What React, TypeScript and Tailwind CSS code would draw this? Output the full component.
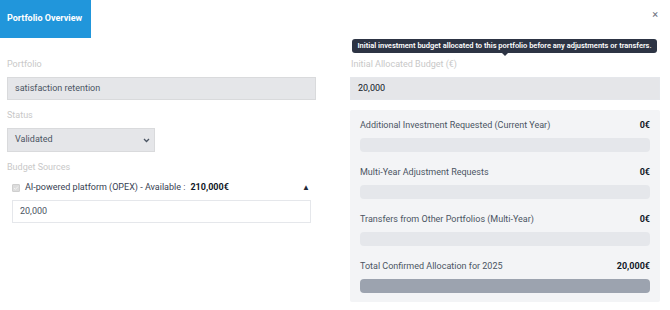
import React from "react";

const rob = { fontFamily: "Roboto, 'Liberation Sans', sans-serif" };

function Row({ label, value, total }: { label: string; value: string; total?: boolean }) {
  return (
    <div className="flex flex-col">
      <div className="flex items-center justify-between h-[12px] text-[9px] text-[#4b5563]">
        <span>{label}</span>
        <span className="font-bold text-[#111827]">{value}</span>
      </div>
      <div className={`mt-[6px] h-[14px] rounded-[4px] ${total ? "bg-[#9ca3af]" : "bg-[#e5e7eb]"}`} />
    </div>
  );
}

export default function App() {
  return (
    <div className="relative w-[670px] h-[310px] bg-white overflow-hidden" style={rob}>
      <div className="flex items-start justify-between">
        <div className="w-[91px] h-[38px] bg-[#2196db] flex items-center pl-[7px] text-white text-[9px] font-bold">
          Portfolio Overview
        </div>
        <div className="mr-[12px] mt-[7px] text-[11px] text-[#6b7280]">×</div>
      </div>
      <div className="flex mt-[21px] px-[7px] gap-[34px]">
        {/* Left */}
        <div className="w-[309px] flex flex-col">
          <div className="h-[12px] text-[9px] text-[#c8c8c8] flex items-center">Portfolio</div>
          <div className="mt-[6px] h-[23px] border border-[#d9dadc] bg-[#e5e6e9] flex items-center pl-[7px] text-[9px] text-[#4b5563]">
            satisfaction retention
          </div>
          <div className="mt-[10px] h-[12px] text-[9px] text-[#c8c8c8] flex items-center">Status</div>
          <div className="mt-[6px] w-[148px] h-[24px] border border-[#d9dadc] bg-[#e5e6e9] flex items-center justify-between pl-[7px] pr-[4px] text-[9px] text-[#4b5563]">
            <span>Validated</span>
            <svg width="7" height="5" viewBox="0 0 7 5"><path d="M1 1l2.5 2.5L6 1" stroke="#4b5563" strokeWidth="1.3" fill="none" /></svg>
          </div>
          <div className="mt-[10px] h-[12px] text-[9px] text-[#c8c8c8] flex items-center">Budget Sources</div>
          <div className="mt-[8px] ml-[5px] mr-[5px] flex items-center h-[12px] text-[9px] text-[#374151]">
            <span className="w-[8px] h-[8px] rounded-[1px] bg-[#dcdcdc] border border-[#cfcfcf] flex items-center justify-center">
              <svg width="6" height="6" viewBox="0 0 6 6"><path d="M1 3l1.4 1.4L5 1.5" stroke="#f3f3f3" strokeWidth="1" fill="none" /></svg>
            </span>
            <span className="ml-[5px]">AI-powered platform (OPEX) - Available :</span>
            <span className="ml-[5px] font-bold text-[#111827]">210,000€</span>
            <span className="ml-auto mr-[1px] text-[8px] text-[#1f2937]">▲</span>
          </div>
          <div className="mt-[6px] ml-[5px] mr-[5px] h-[23px] border border-[#e5e7eb] bg-white flex items-center pl-[7px] text-[9px] text-[#4b5563]">
            20,000
          </div>
        </div>
        {/* Right */}
        <div className="w-[310px] flex flex-col relative">
          <div className="absolute left-[2px] top-[-20px] w-[305px] h-[14px] rounded-[3px] bg-[#2d3444] text-white text-[7.5px] font-semibold flex items-center justify-center whitespace-nowrap">
            Initial investment budget allocated to this portfolio before any adjustments or transfers.
            <span className="absolute left-[150px] bottom-[-3px] w-0 h-0 border-l-[3px] border-r-[3px] border-t-[3px] border-l-transparent border-r-transparent border-t-[#2d3444]" />
          </div>
          <div className="h-[12px] text-[9px] text-[#c8c8c8] flex items-center pl-[1px]">Initial Allocated Budget (€)</div>
          <div className="mt-[6px] h-[23px] border border-[#e5e7eb] bg-[#e5e6e9] flex items-center pl-[7px] text-[9px] text-[#111827]">
            20,000
          </div>
          <div className="mt-[10px] bg-[#f3f4f6] rounded-[2px] px-[10px] pt-[10px] pb-[9px] flex flex-col gap-[15px]">
            <Row label="Additional Investment Requested (Current Year)" value="0€" />
            <Row label="Multi-Year Adjustment Requests" value="0€" />
            <Row label="Transfers from Other Portfolios (Multi-Year)" value="0€" />
            <Row label="Total Confirmed Allocation for 2025" value="20,000€" total />
          </div>
        </div>
      </div>
    </div>
  );
}
